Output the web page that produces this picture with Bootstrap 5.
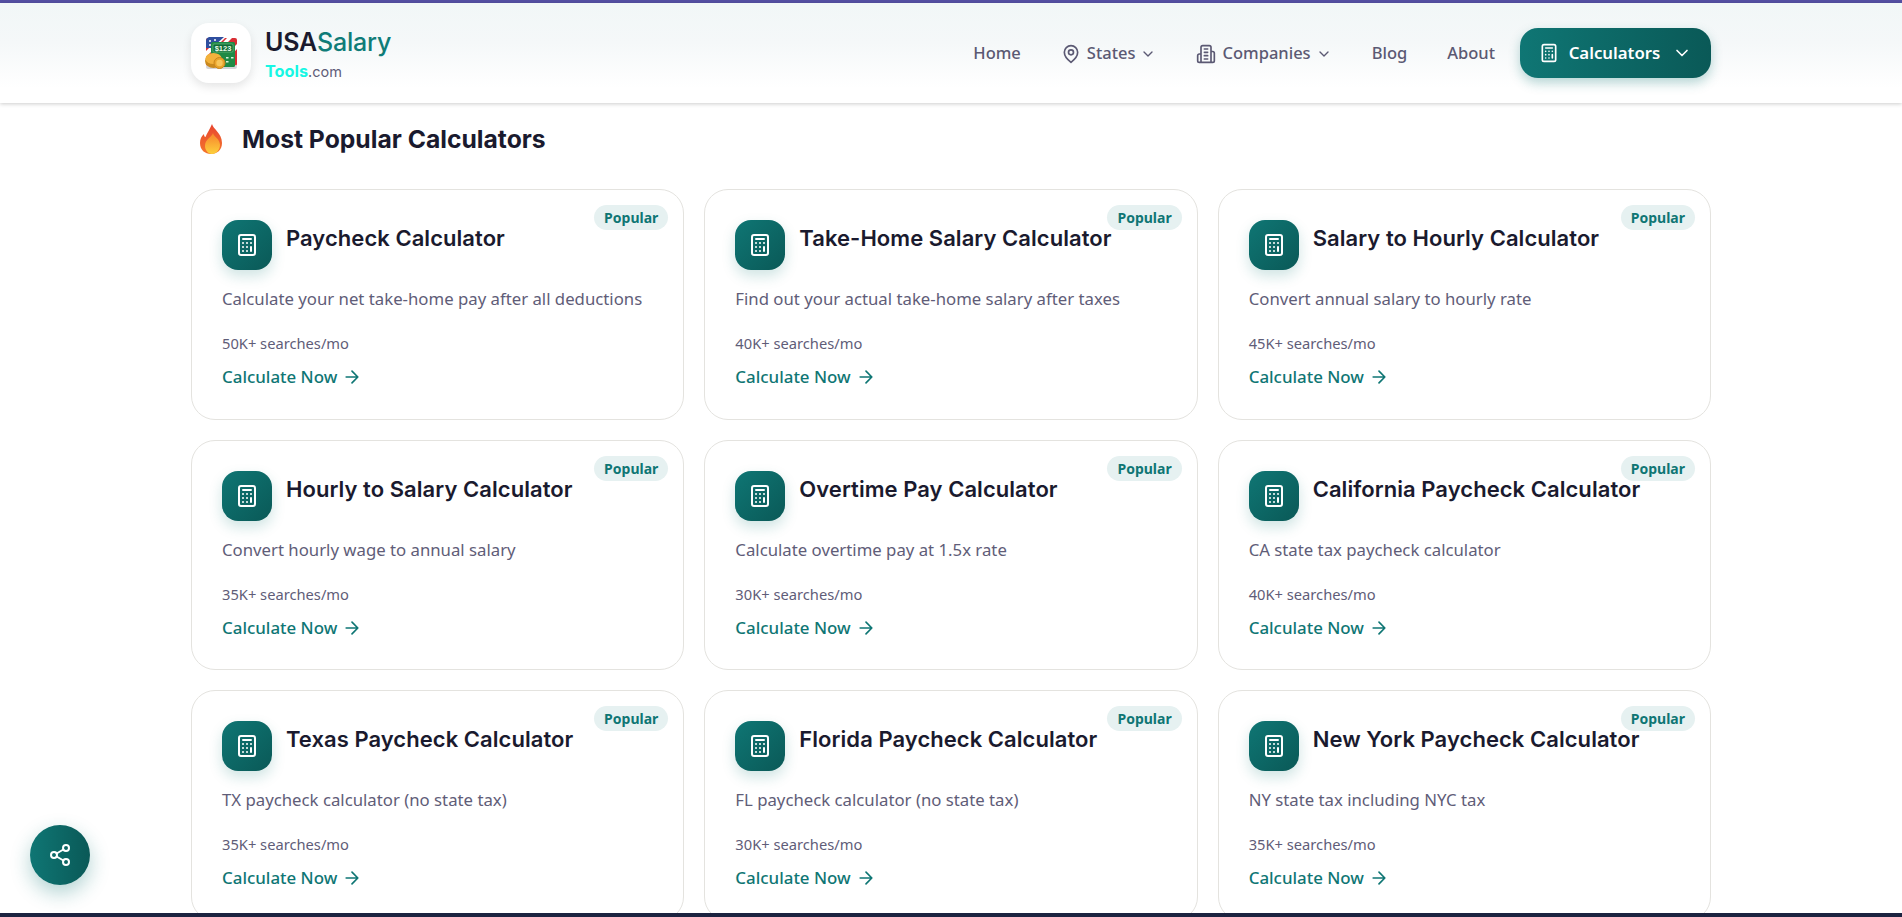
<!DOCTYPE html>
<html lang="en">
<head>
    <meta charset="UTF-8">
    <meta name="viewport" content="width=device-width, initial-scale=1.0">
    <title>USASalaryTools.com</title>
    <link href="https://cdn.jsdelivr.net/npm/bootstrap@5.3.0/dist/css/bootstrap.min.css" rel="stylesheet">
    <style>
        html, body { height: 100%; }
        body { font-family: "Noto Sans", "Liberation Sans", sans-serif; color: #5f5d78; background: #fff; overflow: hidden; }
        .page-frame { height: 100vh; border-top: 3px solid #5450a3; border-bottom: 4px solid #1c2340; }
        .site-wrap { width: 1520px; }
        .site-header { height: 100px; background: linear-gradient(180deg, #f1f7f7 0%, #f5f8f9 40%, #fff 85%); box-shadow: 0 1px 4px rgba(0,0,0,.2); position: relative; z-index: 2; }
        .lucide { fill: none; stroke: currentColor; stroke-width: 2; stroke-linecap: round; stroke-linejoin: round; flex: none; }
        .logo-box { width: 60px; height: 60px; border-radius: 18px; background: #fff; box-shadow: 0 4px 10px rgba(0,0,0,.1); }
        .logo-text { margin-left: 6px; }
        .logo-main { font-family: Inter, sans-serif; font-size: 25px; font-weight: 600; line-height: 30px; color: #1a1a2e; letter-spacing: -.2px; padding-top: 2px; }
        .logo-main span { color: #0f7c78; font-weight: 500; }
        .logo-sub { font-family: Inter, sans-serif; font-size: 14.5px; line-height: 20px; margin-top: 4px; color: #5f5d78; }
        .logo-sub b { color: #17f7e4; font-weight: 700; font-size: 16.3px; }
        .main-nav { font-size: 16.5px; font-weight: 500; color: #5b5973; gap: 25px; }
        .main-nav a { color: inherit; text-decoration: none; margin-right: 15px; padding-top: 1px; }
        .main-nav a:last-of-type { margin-right: 0; }
        .nav-ic { margin-right: 6px; }
        .nav-chev { margin-left: 5px; }
        .calc-btn { height: 50px; width: 191px; padding-top: 1px; border-radius: 18px; color: #fff; font-weight: 600; font-size: 16.8px; background: linear-gradient(90deg, #0f7674, #0a5957); box-shadow: 0 5px 12px rgba(15,118,116,.3); border: 0; }
        .section-head { height: 86.4px; padding: 0 0 12px 8px; }
        .flame-ic { margin-bottom: 2px; }
        .section-title { font-family: Inter, sans-serif; font-size: 24.7px; font-weight: 700; color: #1a1a2e; margin: 0 0 0 19px; }
        .calc-grid { display: grid; grid-template-columns: repeat(3, 1fr); gap: 20px; }
        .calc-card { height: 230.4px; border: 1px solid #e4e3df; border-radius: 24px; padding: 30px; background: #fff; position: relative; }
        .calc-icon { width: 50px; height: 50px; border-radius: 16px; color: #fff; background: linear-gradient(135deg, #0f7674, #0a5957); box-shadow: 0 6px 14px rgba(15,118,116,.2); flex: none; }
        .calc-title { font-family: Inter, sans-serif; font-size: 22px; font-weight: 600; color: #1a1a2e; margin: 5px 0 0 14px; line-height: 26px; white-space: nowrap; letter-spacing: .05px; }
        .popular-tag { position: absolute; top: 15px; right: 15px; height: 25px; padding: 0 10px; border-radius: 13px; background: #e6f1f1; color: #0f7674; font-size: 14px; font-weight: 700; line-height: 25px; }
        .calc-desc { font-size: 16.75px; line-height: 24px; margin: 17px 0 0; }
        .calc-meta { font-size: 14.7px; line-height: 20px; margin-top: 22px; }
        .calc-link { display: flex; align-items: center; gap: 5px; font-size: 16.9px; font-weight: 500; line-height: 24px; color: #0f7674; text-decoration: none; margin-top: 12px; }
        .share-fab { position: fixed; left: 30px; bottom: 32px; width: 60px; height: 60px; color: #fff; background: linear-gradient(90deg, #0f7674, #0a5957); box-shadow: 0 8px 20px rgba(15,118,116,.32); border: 0; }
    </style>
</head>
<body>
<svg width="0" height="0" class="position-absolute">
    <symbol id="ic-calc" viewBox="0 0 24 24"><rect x="4" y="2" width="16" height="20" rx="2"/><path d="M8 6h8M16 14v4M16 10h.01M12 10h.01M8 10h.01M12 14h.01M8 14h.01M12 18h.01M8 18h.01"/></symbol>
    <symbol id="ic-arrow" viewBox="0 0 24 24"><path d="M5 12h14M12 5l7 7-7 7"/></symbol>
    <symbol id="ic-chev" viewBox="0 0 24 24"><path d="M6 9l6 6 6-6"/></symbol>
    <symbol id="ic-pin" viewBox="0 0 24 24"><path d="M20 10c0 6-8 12-8 12s-8-6-8-12a8 8 0 0 1 16 0Z"/><circle cx="12" cy="10" r="3"/></symbol>
    <symbol id="ic-building" viewBox="0 0 24 24"><path d="M6 22V4a2 2 0 0 1 2-2h8a2 2 0 0 1 2 2v18ZM6 12H4a2 2 0 0 0-2 2v6a2 2 0 0 0 2 2h2M18 9h2a2 2 0 0 1 2 2v9a2 2 0 0 1-2 2h-2M10 6h4M10 10h4M10 14h4M10 18h4"/></symbol>
    <symbol id="ic-share" viewBox="0 0 24 24"><circle cx="18" cy="5" r="3"/><circle cx="6" cy="12" r="3"/><circle cx="18" cy="19" r="3"/><path d="M8.590 13.510l6.830 3.980M15.410 6.510l-6.820 3.980"/></symbol>
</svg>
<div class="page-frame d-flex flex-column">
    <header class="site-header flex-shrink-0">
        <div class="site-wrap mx-auto h-100 d-flex align-items-center justify-content-between">
            <a class="d-flex align-items-center gap-2 text-decoration-none" href="#">
                <span class="logo-box d-flex align-items-center justify-content-center">
                    <svg width="33" height="34" viewBox="0 0 33 34">
                        <rect x="1" y="2" width="31" height="28" rx="2" fill="#d92e34"/>
                        <path d="M10 30 L32 8 V13 L16 30ZM14 2 H20 L1 21 V15Z" fill="#fff"/>
                        <path d="M22 2 h5 L1 28 v-4Z" fill="#fff"/>
                        <path d="M1 5 Q1 2 4 1 L19 1 L7 12 H1Z" fill="#2f4f9f"/>
                        <circle cx="5" cy="5" r="1" fill="#fff"/><circle cx="10" cy="4" r="1" fill="#fff"/><circle cx="5" cy="9" r="1" fill="#fff"/>
                        <rect x="1" y="29" width="31" height="4" rx="2" fill="#d4d4d8"/>
                        <rect x="6" y="6" width="24" height="25" rx="1.500" fill="#1f8a45"/>
                        <rect x="8" y="8" width="20" height="8" rx="1" fill="#0f6b35" stroke="#8fd09f" stroke-width=".5"/>
                        <text x="18" y="14.800" font-family="Liberation Sans, sans-serif" font-size="7.500" font-weight="700" fill="#eafbe9" text-anchor="middle">$123</text>
                        <rect x="21" y="21" width="2.500" height="1.500" fill="#d7f3dc"/>
                        <rect x="26" y="21" width="2.500" height="1.500" fill="#d7f3dc"/>
                        <rect x="21" y="25" width="2.500" height="1.500" fill="#d7f3dc"/>
                        <ellipse cx="8.500" cy="25" rx="8.500" ry="7" fill="#c98a1e"/>
                        <ellipse cx="8.500" cy="22.500" rx="8" ry="5.500" fill="#f3b23c"/>
                        <circle cx="14.500" cy="27" r="5.500" fill="#e9a42c" stroke="#c9861c" stroke-width="1"/>
                        <circle cx="14.500" cy="27" r="3.200" fill="#f7c65c"/>
                    </svg>
                </span>
                <span class="logo-text d-block">
                    <span class="logo-main d-block">USA<span>Salary</span></span>
                    <span class="logo-sub d-block"><b>Tools</b>.com</span>
                </span>
            </a>
            <nav class="main-nav d-flex align-items-center">
                <a href="#">Home</a>
                <a href="#" class="d-flex align-items-center">
                    <svg width="20" height="20" class="lucide nav-ic"><use href="#ic-pin"/></svg>
                    States
                    <svg width="16" height="16" class="lucide nav-chev"><use href="#ic-chev"/></svg>
                </a>
                <a href="#" class="d-flex align-items-center">
                    <svg width="20" height="20" class="lucide nav-ic"><use href="#ic-building"/></svg>
                    Companies
                    <svg width="16" height="16" class="lucide nav-chev"><use href="#ic-chev"/></svg>
                </a>
                <a href="#">Blog</a>
                <a href="#">About</a>
                <button class="calc-btn d-flex align-items-center justify-content-center">
                    <svg width="20" height="20" class="lucide" style="margin-right:10px"><use href="#ic-calc"/></svg>
                    Calculators
                    <svg width="20" height="20" class="lucide" style="margin-left:12px"><use href="#ic-chev"/></svg>
                </button>
            </nav>
        </div>
    </header>
    <main class="flex-grow-1 overflow-hidden">
        <div class="site-wrap mx-auto">
            <div class="section-head d-flex align-items-center">
                <svg width="24" height="30" viewBox="0 0 24 30" class="flame-ic">
                    <defs>
                        <linearGradient id="flame-a" x1="0" y1="0" x2="0" y2="1"><stop offset="0" stop-color="#e8452f"/><stop offset="1" stop-color="#f4762c"/></linearGradient>
                        <linearGradient id="flame-b" x1="0" y1="0" x2="0" y2="1"><stop offset="0" stop-color="#f7822c"/><stop offset="1" stop-color="#fdd13c"/></linearGradient>
                    </defs>
                    <path d="M13 0c1 5 10 9 10 19 0 7-5 11-11 11S1 26 1 19c0-4 1.500-7 4-9 0 2 .6 3 1.500 3C8 9 11 5 13 0z" fill="url(#flame-a)"/>
                    <path d="M14 9c1 4 7 6 7 12 0 5-4 9-8 9s-7-4-7-8c0-7 6-8 8-13z" fill="url(#flame-b)"/>
                </svg>
                <h2 class="section-title">Most Popular Calculators</h2>
            </div>
            <div class="calc-grid">
                <div class="calc-card">
                    <span class="popular-tag">Popular</span>
                    <div class="d-flex">
                        <span class="calc-icon d-flex align-items-center justify-content-center"><svg width="24" height="24" class="lucide"><use href="#ic-calc"/></svg></span>
                        <h3 class="calc-title">Paycheck Calculator</h3>
                    </div>
                    <p class="calc-desc">Calculate your net take-home pay after all deductions</p>
                    <div class="calc-meta">50K+ searches/mo</div>
                    <a href="#" class="calc-link">Calculate Now <svg width="20" height="20" class="lucide"><use href="#ic-arrow"/></svg></a>
                </div>
                <div class="calc-card">
                    <span class="popular-tag">Popular</span>
                    <div class="d-flex">
                        <span class="calc-icon d-flex align-items-center justify-content-center"><svg width="24" height="24" class="lucide"><use href="#ic-calc"/></svg></span>
                        <h3 class="calc-title">Take-Home Salary Calculator</h3>
                    </div>
                    <p class="calc-desc">Find out your actual take-home salary after taxes</p>
                    <div class="calc-meta">40K+ searches/mo</div>
                    <a href="#" class="calc-link">Calculate Now <svg width="20" height="20" class="lucide"><use href="#ic-arrow"/></svg></a>
                </div>
                <div class="calc-card">
                    <span class="popular-tag">Popular</span>
                    <div class="d-flex">
                        <span class="calc-icon d-flex align-items-center justify-content-center"><svg width="24" height="24" class="lucide"><use href="#ic-calc"/></svg></span>
                        <h3 class="calc-title">Salary to Hourly Calculator</h3>
                    </div>
                    <p class="calc-desc">Convert annual salary to hourly rate</p>
                    <div class="calc-meta">45K+ searches/mo</div>
                    <a href="#" class="calc-link">Calculate Now <svg width="20" height="20" class="lucide"><use href="#ic-arrow"/></svg></a>
                </div>
                <div class="calc-card">
                    <span class="popular-tag">Popular</span>
                    <div class="d-flex">
                        <span class="calc-icon d-flex align-items-center justify-content-center"><svg width="24" height="24" class="lucide"><use href="#ic-calc"/></svg></span>
                        <h3 class="calc-title">Hourly to Salary Calculator</h3>
                    </div>
                    <p class="calc-desc">Convert hourly wage to annual salary</p>
                    <div class="calc-meta">35K+ searches/mo</div>
                    <a href="#" class="calc-link">Calculate Now <svg width="20" height="20" class="lucide"><use href="#ic-arrow"/></svg></a>
                </div>
                <div class="calc-card">
                    <span class="popular-tag">Popular</span>
                    <div class="d-flex">
                        <span class="calc-icon d-flex align-items-center justify-content-center"><svg width="24" height="24" class="lucide"><use href="#ic-calc"/></svg></span>
                        <h3 class="calc-title">Overtime Pay Calculator</h3>
                    </div>
                    <p class="calc-desc">Calculate overtime pay at 1.5x rate</p>
                    <div class="calc-meta">30K+ searches/mo</div>
                    <a href="#" class="calc-link">Calculate Now <svg width="20" height="20" class="lucide"><use href="#ic-arrow"/></svg></a>
                </div>
                <div class="calc-card">
                    <span class="popular-tag">Popular</span>
                    <div class="d-flex">
                        <span class="calc-icon d-flex align-items-center justify-content-center"><svg width="24" height="24" class="lucide"><use href="#ic-calc"/></svg></span>
                        <h3 class="calc-title">California Paycheck Calculator</h3>
                    </div>
                    <p class="calc-desc">CA state tax paycheck calculator</p>
                    <div class="calc-meta">40K+ searches/mo</div>
                    <a href="#" class="calc-link">Calculate Now <svg width="20" height="20" class="lucide"><use href="#ic-arrow"/></svg></a>
                </div>
                <div class="calc-card">
                    <span class="popular-tag">Popular</span>
                    <div class="d-flex">
                        <span class="calc-icon d-flex align-items-center justify-content-center"><svg width="24" height="24" class="lucide"><use href="#ic-calc"/></svg></span>
                        <h3 class="calc-title">Texas Paycheck Calculator</h3>
                    </div>
                    <p class="calc-desc">TX paycheck calculator (no state tax)</p>
                    <div class="calc-meta">35K+ searches/mo</div>
                    <a href="#" class="calc-link">Calculate Now <svg width="20" height="20" class="lucide"><use href="#ic-arrow"/></svg></a>
                </div>
                <div class="calc-card">
                    <span class="popular-tag">Popular</span>
                    <div class="d-flex">
                        <span class="calc-icon d-flex align-items-center justify-content-center"><svg width="24" height="24" class="lucide"><use href="#ic-calc"/></svg></span>
                        <h3 class="calc-title">Florida Paycheck Calculator</h3>
                    </div>
                    <p class="calc-desc">FL paycheck calculator (no state tax)</p>
                    <div class="calc-meta">30K+ searches/mo</div>
                    <a href="#" class="calc-link">Calculate Now <svg width="20" height="20" class="lucide"><use href="#ic-arrow"/></svg></a>
                </div>
                <div class="calc-card">
                    <span class="popular-tag">Popular</span>
                    <div class="d-flex">
                        <span class="calc-icon d-flex align-items-center justify-content-center"><svg width="24" height="24" class="lucide"><use href="#ic-calc"/></svg></span>
                        <h3 class="calc-title">New York Paycheck Calculator</h3>
                    </div>
                    <p class="calc-desc">NY state tax including NYC tax</p>
                    <div class="calc-meta">35K+ searches/mo</div>
                    <a href="#" class="calc-link">Calculate Now <svg width="20" height="20" class="lucide"><use href="#ic-arrow"/></svg></a>
                </div>
            </div>
        </div>
    </main>
</div>
<button class="share-fab rounded-circle d-flex align-items-center justify-content-center">
    <svg width="24" height="24" class="lucide"><use href="#ic-share"/></svg>
</button>
<script src="https://cdn.jsdelivr.net/npm/bootstrap@5.3.0/dist/js/bootstrap.bundle.min.js"></script>
</body>
</html>
